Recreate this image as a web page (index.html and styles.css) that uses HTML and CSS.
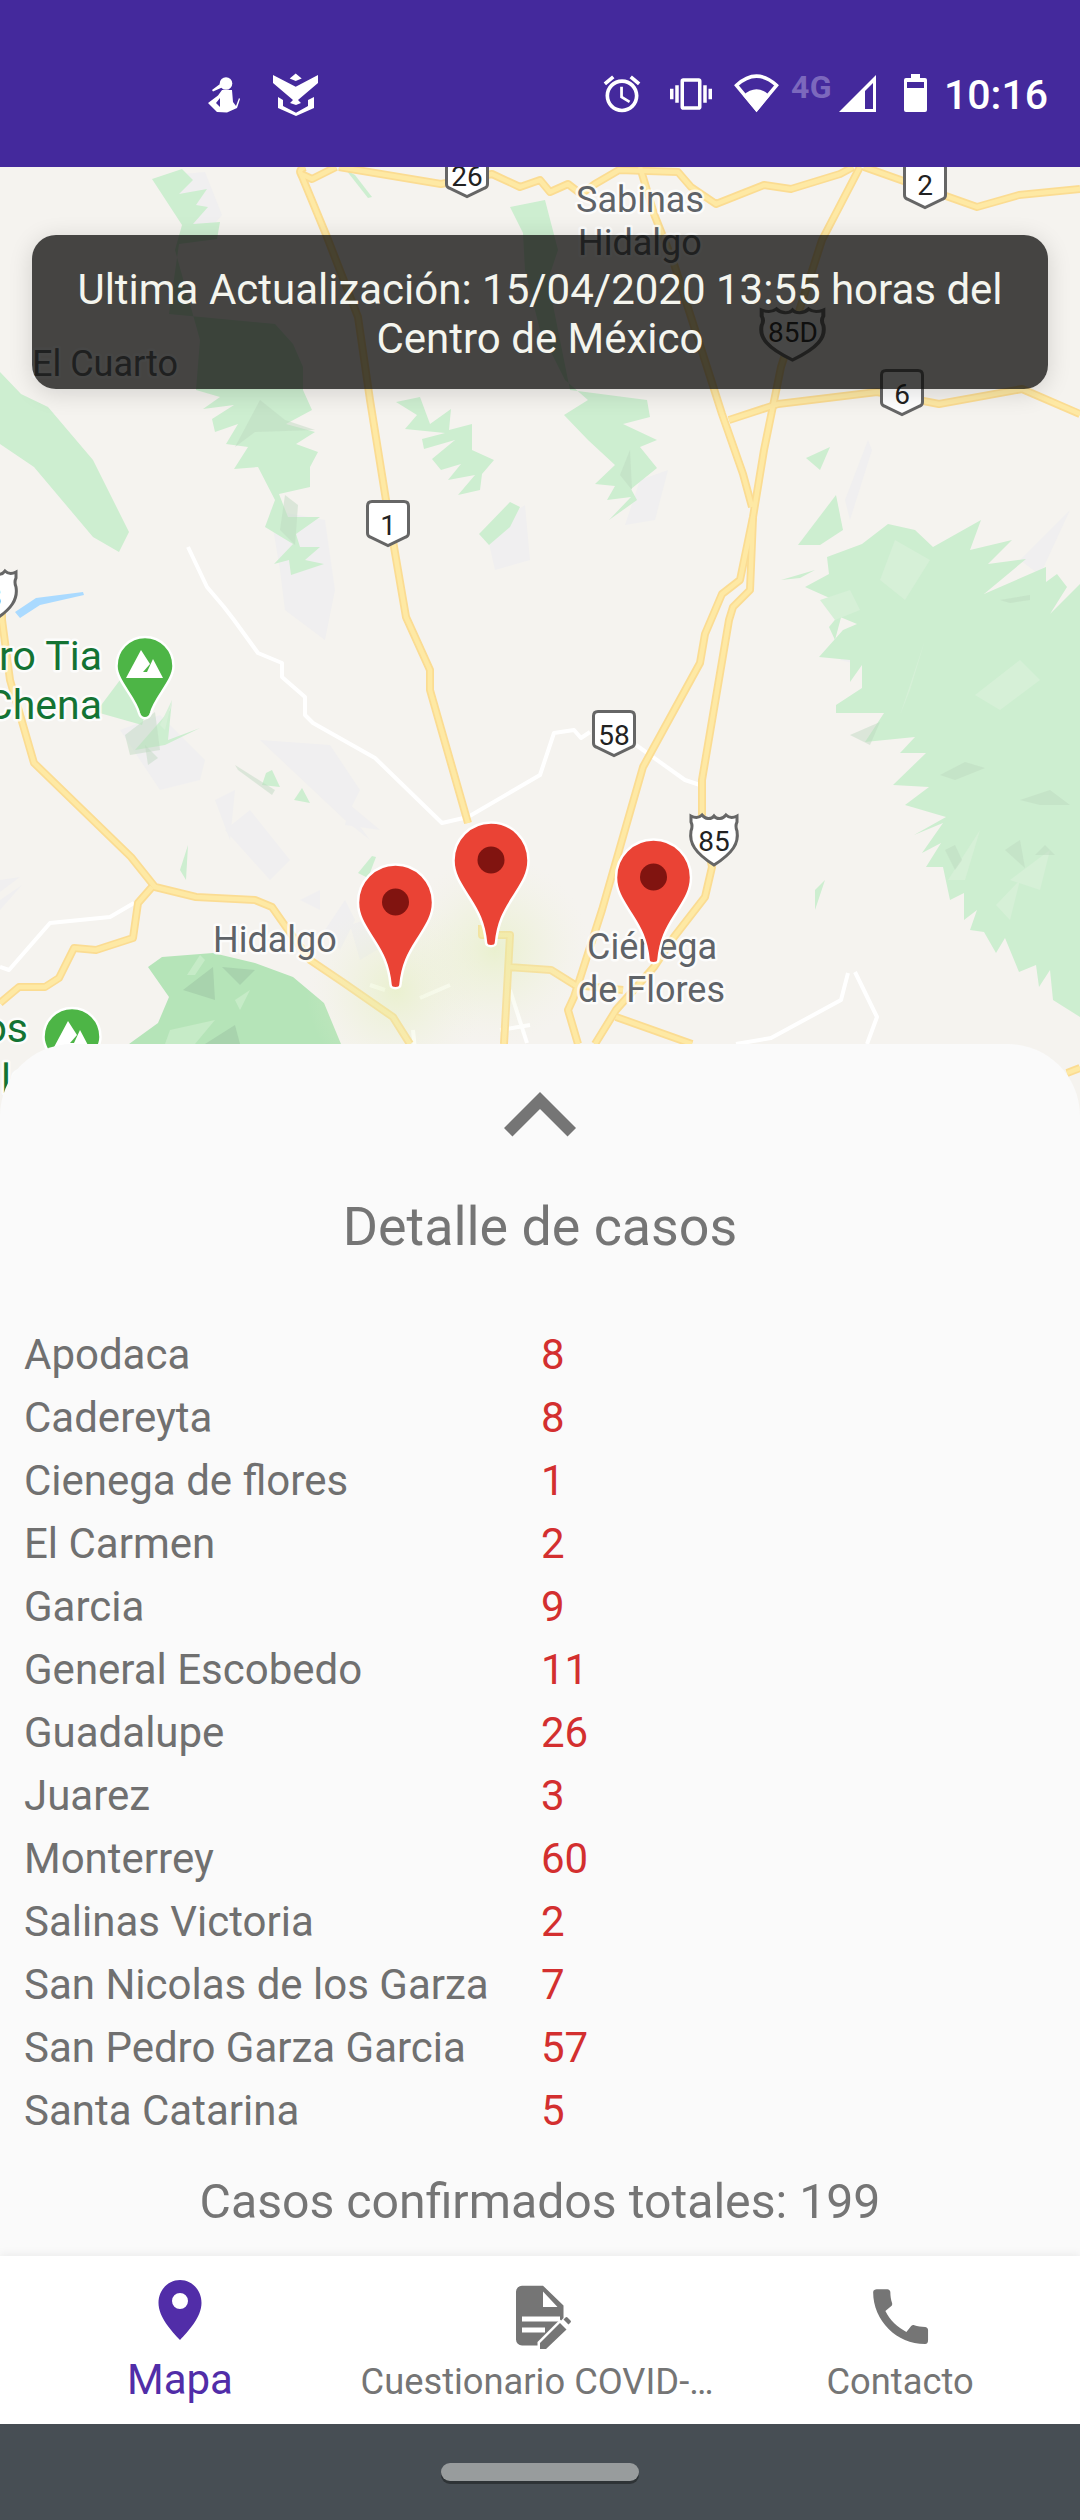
FILE: index.html
```html
<!DOCTYPE html>
<html lang="es">
<head>
<meta charset="utf-8">
<title>Mapa COVID-19</title>
<link rel="stylesheet" href="styles.css">
</head>
<body>
<div class="screen">
  <header class="statusbar">
    <div class="status-left">
      <svg class="sb-icon" width="32" height="44" viewBox="208 72 32 44"><circle cx="226" cy="83.5" r="6.3"/><path d="M220 84l-8 6 1 1.500 9-4zM222 90h10l1 12 3 4 3-8 1 1-3 9-10 4.500-10-.5-9-9 10-7.500zM216 103l4-5v9z" fill-rule="evenodd"/></svg>
      <svg class="sb-icon shield-icon" width="46" height="44" viewBox="273 72 46 44"><path d="M273 75l22.700 11.700L318 75v8l-20 17 3 3-5 2-6-2 3-3-20-17zM295.700 73.500l6 5-6 2.500-6-2.500zM278 97l5 3v6l13 6.700 12-6.700v-6l6-3v11l-18 8-18-8z"/></svg>
    </div>
    <div class="status-right">
      <svg class="sb-icon" width="44" height="44" viewBox="0 0 24 24"><path d="M22 5.720l-4.600-3.860-1.290 1.530 4.600 3.860L22 5.720zM7.880 3.390L6.600 1.860 2 5.710l1.290 1.530 4.590-3.850zM12.500 8H11v6l4.750 2.850.75-1.230-4-2.370V8zM12 4c-4.970 0-9 4.030-9 9s4.030 9 9 9 9-4.030 9-9-4.030-9-9-9zm0 16c-3.870 0-7-3.130-7-7s3.130-7 7-7 7 3.130 7 7-3.130 7-7 7z"/></svg>
      <svg class="sb-icon gap-26" width="42" height="42" viewBox="0 0 24 24"><path d="M0 15h2V9H0v6zm3 2h2V7H3v10zm19-8v6h2V9h-2zm-3 8h2V7h-2v10zM16.500 3h-9C6.670 3 6 3.670 6 4.500v15c0 .83.670 1.500 1.500 1.500h9c.83 0 1.500-.67 1.500-1.500v-15c0-.83-.67-1.500-1.500-1.500zM16 19H8V5h8v14z"/></svg>
      <svg class="sb-icon gap-22" width="45" height="44" viewBox="735 72 45 44"><path class="wifi-outline" d="M757.500 109.500L737.500 85.300Q757.500 67 777.500 85.300z"/><path d="M757.500 112L744 95.500Q757.500 83 771 95.500z"/></svg>
      <span class="net">4G</span>
      <svg class="sb-icon gap-6" width="37" height="44" viewBox="840 72 37 44"><path fill-rule="evenodd" d="M877 75v37h-37zM874 83l-8 8v18h8z"/></svg>
      <svg class="sb-icon gap-28" width="23" height="44" viewBox="905 72 23 44"><path fill-rule="evenodd" d="M912 74h9v4h5a2 2 0 0 1 2 2v30a2 2 0 0 1-2 2h-19a2 2 0 0 1-2-2V80a2 2 0 0 1 2-2h5zM908 82v6h17v-6z"/></svg>
      <span class="clock">10:16</span>
    </div>
  </header>

  <main class="stage">
    <svg class="map" width="1080" height="960" viewBox="0 167 1080 960" aria-label="Mapa">
      <defs>
        <radialGradient id="glow">
          <stop offset="0" stop-color="#dfeeb0" stop-opacity=".5"/>
          <stop offset=".55" stop-color="#e6efc4" stop-opacity=".22"/>
          <stop offset="1" stop-color="#f0f2dc" stop-opacity="0"/>
        </radialGradient>
        <path id="shield" d="M6 1.500H38Q42.500 1.500 42.500 6V33Q42.500 36 40 37L22 45.500 4 37Q1.500 36 1.500 33V6Q1.500 1.500 6 1.500Z"/>
        <path id="usshield" d="M2 3C6 5 10 5 13 2 16 6 22 7 25 3 28 7 34 6 37 2 40 5 44 5 48 3V9Q46 13 48 18C50 30 44 40 25 52 6 40 0 30 2 18Q4 13 2 9Z"/>
        <path id="pin" d="M0 0C21 0 37.500 17 37.500 38 37.500 52 30 62 22 75 13 89 7 100 5 120 5 125-5 125-5 120-7 100-13 89-22 75-30 62-37.500 52-37.500 38-37.500 17-21 0 0 0Z"/>
        <path id="greenpin" d="M0 0C16 0 28.500 13 28.500 29 28.500 44 10 60 6 76 4 83-4 83-6 76-10 60-28.500 44-28.500 29-28.500 13-16 0 0 0Z"/>
        <g id="highways">
          <path d="M301 174L327 237 358 317 370 400 386 500 406 617 430 670 430 690 468 823"/>
          <path d="M482 925V935H510L504 1044M508 967L551 970 575 985 623 990"/>
          <path d="M305 167Q298 170 301 174L312 179 336 167"/>
          <path d="M339 167L441 184 492 174 520 187 540 180 550 192 568 184 581 194 595 184 619 170 678 172 691 187 716 204 764 185 791 189 840 174 853 167"/>
          <path d="M864 167L977 207 1019 195 1080 189"/>
          <path d="M640 167L654 214 674 264 722 414 743 474 752 507"/>
          <path d="M729 420L778 404 877 392 939 404 1022 389 1080 414"/>
          <path d="M860 167L822 240 781 367 764 450 753 517 740 580 722 594 705 634 700 663 643 767 602 910 574 997 568 1010 578 1044"/>
          <path d="M753 517L750 590 733 607 729 620 702 780V817L712 867 705 897 674 937 654 967 616 1010 595 1044"/>
          <path d="M616 1017L692 1044M1067 1073L1080 1068"/>
          <path d="M2 600V620L10 680 34 763 131 857 155 887 196 897 255 900 272 907 286 927 310 960 344 983 393 1017 410 1044"/>
          <path d="M152 887L138 903 133 938 96 950 74 948 59 978 45 987 19 987 0 1003"/>
        </g>
      </defs>
      <rect class="land" x="0" y="167" width="1080" height="960"/>

      <g class="terrain-gray">
        <polygon points="170,175 205,172 222,215 200,240 185,210"/>
        <polygon points="270,510 325,520 335,590 325,640 285,610 280,570"/>
        <polygon points="486,530 525,505 530,560 495,570"/>
        <polygon points="640,480 668,470 655,520 625,525"/>
        <polygon points="845,500 868,440 872,450 850,520"/>
        <polygon points="860,610 905,570 900,620"/>
        <polygon points="1020,560 1070,510 1040,575"/>
        <polygon points="840,660 870,640 880,670"/>
        <polygon points="120,730 160,715 205,760 200,780 160,790 140,760"/>
        <polygon points="215,800 235,790 230,840"/>
        <polygon points="225,830 250,810 290,860 270,880"/>
        <polygon points="260,740 330,745 360,790 345,820"/>
        <polygon points="330,790 340,800 370,840 345,820"/>
        <polygon points="350,805 380,830 345,825"/>
        <polygon points="300,900 320,890 320,910"/>
        <polygon points="325,930 345,900 355,920 340,950"/>
        <polygon points="350,925 365,920 375,900 385,945 360,960"/>
        <polygon points="0,900 22,885 0,910"/>
        <polygon points="0,880 20,877 0,892"/>
      </g>

      <g class="terrain-green">
        <polygon points="0,372 21,394 48,407 93,460 110,494 129,532 119,552 93,537 34,467 0,444"/>
        <polygon points="152,179 182,169 193,180 179,194 207,189 196,205 208,207 193,224 220,222 217,239 179,244 169,314 275,324 293,344 303,367 303,390 312,410 286,424 315,432 296,444 318,452 310,467 310,487 279,494 288,517 320,517 296,534 300,547 320,547 305,560 324,564 291,575 289,560 274,564 293,544 265,527 275,500 258,467 234,469 248,447 226,444 238,424 215,432 212,419 234,405 203,409 220,397 196,390 200,340 175,250 182,225"/>
        <polygon points="396,402 420,397 430,424 451,409 449,430 472,424 472,450 494,460 482,474 480,490 458,495 475,475 448,480 461,464 441,470 432,459 455,440 424,449 422,439 445,433 405,429 417,415"/>
        <polygon points="479,534 510,502 520,507 510,527 489,545"/>
        <polygon points="510,207 545,200 558,250 548,280 570,390 647,400 650,417 623,424 657,440 640,447 657,468 631,489 637,500 609,520 631,497 607,500 615,486 595,484 615,465 588,440 564,415 588,400 565,380 540,330 525,270 523,233"/>
        <polygon points="888,524 915,530 933,547 981,520 970,550 1012,540 988,564 1026,559 984,594 1046,567 1046,582 1057,574 1067,587 1050,614 1080,584 1080,1017 1053,1000 1050,970 1039,987 1036,965 1019,972 1005,938 996,953 984,932 970,930 977,910 964,920 964,893 950,900 943,867 926,867 941,843 922,853 943,823 914,835 946,817 905,805 929,787 893,785 926,753 900,753 915,737 865,742 884,713 836,713 836,705 862,688 862,665 850,682 850,660 819,657 843,630 857,624 833,614 843,604 805,587 829,574 827,557 862,544"/>
        <polygon points="798,545 836,495 843,530 820,545"/>
        <polygon points="781,580 815,570 800,578"/>
        <polygon points="806,458 830,447 820,470"/>
        <polygon points="829,627 843,610 835,640"/>
        <polygon points="96,712 120,680 145,715 142,725"/>
        <polygon points="135,750 170,710 172,700 168,740 200,728 165,745"/>
        <polygon points="266,773 272,770 280,787 262,785"/>
        <polygon points="294,800 302,788 310,803"/>
        <polygon points="358,873 372,856 376,857 368,878"/>
        <polygon points="180,870 188,845 186,880"/>
        <polygon points="815,890 825,880 815,910"/>
        <polygon points="346,170 355,175 372,197 368,198"/>
      </g>

      <g class="terrain-light">
        <polygon points="820,600 850,590 860,610 835,620"/>
        <polygon points="895,540 930,560 905,600 880,580"/>
        <polygon points="900,715 925,640 910,690"/>
        <polygon points="975,695 1020,660 1040,680 1000,710"/>
        <polygon points="948,880 980,830 965,880"/>
        <polygon points="1010,880 1050,850 1040,890"/>
        <polygon points="996,905 1020,880 1010,920"/>
        <polygon points="160,725 172,700 165,730"/>
      </g>

      <g class="terrain-shade">
        <polygon points="850,735 880,722 870,745"/>
        <polygon points="940,775 965,762 985,768 955,780"/>
        <polygon points="1020,800 1050,790 1070,805 1040,805"/>
        <polygon points="955,845 962,860 955,870 945,850"/>
        <polygon points="1005,850 1020,840 1025,868"/>
        <polygon points="1035,855 1055,855 1045,845"/>
        <polygon points="260,400 285,420 315,430 255,432 235,447"/>
        <polygon points="285,495 298,505 295,545 280,530"/>
        <polygon points="125,735 155,712 160,750 130,755"/>
        <polygon points="145,745 158,758 148,765"/>
        <polygon points="235,765 275,790 272,795 238,770"/>
        <polygon points="1000,600 1030,595 1030,600 1010,603"/>
        <polygon points="620,475 630,450 632,490"/>
      </g>

      <polygon class="water" points="15,612 36,598 83,592 84,595 40,605 20,618"/>

      <g class="minor">
        <path d="M188 547L207 587 224 607 234 620 258 653 282 663V677L305 697V715L313 723 375 758 442 823 468 817 540 775 554 733 574 730 581 738 590 732"/>
        <path d="M636 745L685 780 700 785"/>
        <path d="M134 903L110 917 50 923 9 970 0 967"/>
        <path d="M848 973L841 1000 771 1038 736 1044M855 972L877 1017 867 1044"/>
        <path d="M510 990L527 1043"/>
        <path d="M370 985L385 990M420 998L450 985M415 1050L413 1030M500 1030L530 1025"/>
      </g>

      <use href="#highways" class="road-case"/>
      <use href="#highways" class="road-fill"/>

      <polygon class="forest" points="148,967 162,957 213,953 255,963 293,977 324,1003 341,1044 129,1044 158,1023 169,997"/>
      <g class="forest-shade">
        <polygon points="213,967 215,1000 183,990"/>
        <polygon points="222,967 255,970 240,985"/>
        <polygon points="235,1025 240,1044 205,1044"/>
      </g>
      <g class="forest-light">
        <polygon points="187,975 200,955 205,960 195,975"/>
        <polygon points="170,1030 215,1020 195,1044 165,1044"/>
        <polygon points="235,1000 250,990 240,1010"/>
      </g>

      <ellipse cx="396" cy="990" rx="90" ry="95" fill="url(#glow)"/>
      <ellipse cx="495" cy="950" rx="95" ry="95" fill="url(#glow)"/>

      <g class="map-label">
        <text x="576" y="212">Sabinas</text>
        <text x="578" y="255">Hidalgo</text>
        <text x="32" y="376">El Cuarto</text>
        <text x="213" y="952">Hidalgo</text>
        <text x="587" y="959">Ciénega</text>
        <text x="578" y="1002">de Flores</text>
      </g>
      <g class="park-label">
        <text x="102" y="670" text-anchor="end">ro Tia</text>
        <text x="102" y="719" text-anchor="end">Chena</text>
        <text x="28" y="1042" text-anchor="end">os</text>
        <text x="1" y="1093">la</text>
      </g>

      <g>
        <use href="#greenpin" x="145" y="637" class="park-pin"/>
        <path class="park-glyph" d="M126 678L141 650 150 664 143 672 147 672 153 659 163 678z"/>
        <use href="#greenpin" x="72" y="1008" class="park-pin"/>
        <path class="park-glyph" d="M53 1049L68 1021 77 1035 70 1043 74 1043 80 1030 90 1049z"/>
      </g>

      <g class="shields">
        <use href="#shield" x="445" y="151"/>
        <use href="#shield" x="903" y="162"/>
        <use href="#shield" x="880" y="369"/>
        <use href="#shield" x="366" y="500"/>
        <use href="#shield" x="592" y="710"/>
        <use href="#usshield" x="689" y="813"/>
        <use href="#usshield" transform="translate(759 307) scale(1.34 1.02)"/>
        <use href="#usshield" x="-32" y="569"/>
      </g>
      <g class="shield-num">
        <text x="467" y="186">26</text>
        <text x="925" y="195">2</text>
        <text x="902" y="404">6</text>
        <text x="388" y="535">1</text>
        <text x="614" y="745">58</text>
        <text x="714" y="851">85</text>
        <text x="793" y="342">85D</text>
        <text x="-6" y="607">3</text>
      </g>

      <g>
        <use href="#pin" x="395.500" y="864.500" class="pin"/>
        <ellipse class="pin-dot" cx="395.500" cy="902" rx="13.500" ry="13.500"/>
        <use href="#pin" x="491" y="822.500" class="pin"/>
        <ellipse class="pin-dot" cx="491" cy="860" rx="13.500" ry="13.500"/>
        <use href="#pin" x="653.500" y="839.500" class="pin"/>
        <ellipse class="pin-dot" cx="653.500" cy="877" rx="13.500" ry="13.500"/>
      </g>
    </svg>

    <div class="toast">Ultima Actualización: 15/04/2020 13:55 horas del Centro de México</div>

    <section class="sheet">
      <svg class="chevron" width="144" height="144" viewBox="0 0 24 24"><path d="M12 8l-6 6 1.410 1.410L12 10.830l4.590 4.580L18 14z"/></svg>
      <h1 class="sheet-title">Detalle de casos</h1>
      <ul class="cases">
        <li class="case"><span class="case-name">Apodaca</span><span class="case-num">8</span></li>
        <li class="case"><span class="case-name">Cadereyta</span><span class="case-num">8</span></li>
        <li class="case"><span class="case-name">Cienega de flores</span><span class="case-num">1</span></li>
        <li class="case"><span class="case-name">El Carmen</span><span class="case-num">2</span></li>
        <li class="case"><span class="case-name">Garcia</span><span class="case-num">9</span></li>
        <li class="case"><span class="case-name">General Escobedo</span><span class="case-num">11</span></li>
        <li class="case"><span class="case-name">Guadalupe</span><span class="case-num">26</span></li>
        <li class="case"><span class="case-name">Juarez</span><span class="case-num">3</span></li>
        <li class="case"><span class="case-name">Monterrey</span><span class="case-num">60</span></li>
        <li class="case"><span class="case-name">Salinas Victoria</span><span class="case-num">2</span></li>
        <li class="case"><span class="case-name">San Nicolas de los Garza</span><span class="case-num">7</span></li>
        <li class="case"><span class="case-name">San Pedro Garza Garcia</span><span class="case-num">57</span></li>
        <li class="case"><span class="case-name">Santa Catarina</span><span class="case-num">5</span></li>
      </ul>
      <p class="total">Casos confirmados totales: 199</p>
    </section>
  </main>

  <nav class="tabs">
    <div class="tab tab-active">
      <svg class="tab-icon" width="90" height="80" viewBox="135 2276 90 80"><path d="M180 2280c12 0 21.500 10 21.500 23 0 14-13 28-21.500 37-8.500-9-21.500-23-21.500-37 0-13 9.500-23 21.500-23zM180 2293a8 8 0 1 0 0 16 8 8 0 1 0 0-16z" fill-rule="evenodd"/></svg>
      <span class="tab-label">Mapa</span>
    </div>
    <div class="tab">
      <svg class="tab-icon" width="90" height="80" viewBox="495 2276 90 80">
        <g transform="translate(500 2275)">
          <path d="M22 10.700H43L63.500 30.500V43L38.500 70.500H22a6 6 0 0 1-6-6V16.700a6 6 0 0 1 6-6z"/>
          <path class="icon-cut" d="M43 16.500L57.500 32H43zM22 41.500H60V46.500H22zM22 52.500H45V57.500H22z"/>
          <path class="pencil-halo" d="M40 74v-6L60 48l6.500 6.500L46 74z"/>
          <path d="M40 74v-6L60 48l6.500 6.500L46 74zM63.500 44.500l2-2q1-1 2 0l3 3q1 1 0 2l-2 2z"/>
        </g>
      </svg>
      <span class="tab-label tab-label-clip">Cuestionario COVID-…</span>
    </div>
    <div class="tab">
      <svg class="tab-icon" width="90" height="80" viewBox="855 2276 90 80"><path transform="translate(864 2280) scale(3.050)" d="M20.010 15.380c-1.230 0-2.420-.2-3.530-.56-.35-.12-.74-.03-1.010.24l-1.570 1.970c-2.830-1.350-5.480-3.900-6.890-6.830l1.950-1.660c.27-.28.350-.67.240-1.020-.37-1.110-.56-2.300-.56-3.530 0-.54-.45-.99-.99-.99H4.190C3.650 3 3 3.240 3 3.990 3 13.280 10.730 21 20.010 21c.71 0 .99-.63.99-1.180v-3.450c0-.54-.45-.99-.99-.99z"/></svg>
      <span class="tab-label">Contacto</span>
    </div>
  </nav>

  <footer class="navbar"><span class="home-pill"></span></footer>
</div>
</body>
</html>
```

FILE: styles.css
```css
* { box-sizing: border-box; }
html, body { margin: 0; padding: 0; }
body { font-family: Roboto, "Liberation Sans", sans-serif; background: #fafafa; }

.screen { width: 1080px; height: 2520px; display: flex; flex-direction: column; overflow: hidden; }

/* status bar */
.statusbar { height: 167px; flex: none; background: #44299c; display: flex; justify-content: space-between; padding: 72px 32px 0 208px; align-items: flex-start; position: relative; z-index: 3; }
.status-left, .status-right { display: flex; align-items: flex-start; }
.sb-icon { display: block; fill: #fff; flex: none; }
.shield-icon { margin-left: 33px; }
.gap-26 { margin-left: 26px; margin-top: 1px; }
.gap-22 { margin-left: 22px; }
.gap-6 { margin-left: 6px; }
.gap-28 { margin-left: 28px; }
.wifi-outline { fill: none; stroke: #fff; stroke-width: 3.500px; stroke-linejoin: miter; }
.net { margin-left: 12px; font-size: 32px; line-height: 30px; font-weight: 700; color: #7c68bd; width: 42px; margin-top: 0; letter-spacing: .5px; }
.clock { margin-left: 17px; font-size: 41px; line-height: 44px; font-weight: 500; color: #fff; margin-top: 1px; }

/* map stage */
.stage { flex: 1; position: relative; display: flex; flex-direction: column; min-height: 0; }
.map { position: absolute; left: 0; top: 0; display: block; }
.land { fill: #f5f3ef; }
.terrain-gray polygon { fill: #f0eff0; }
.terrain-green polygon { fill: #cdeed0; }
.terrain-light polygon { fill: #d6f0d7; }
.terrain-shade polygon { fill: #bcd6bf; opacity: .45; }
.water { fill: #aadaff; }
.minor path { fill: none; stroke: #fff; stroke-width: 4px; stroke-linejoin: round; }
.road-case { fill: none; stroke: #fbdc92; stroke-width: 8px; stroke-linejoin: round; }
.road-fill { fill: none; stroke: #fee9a4; stroke-width: 4.500px; stroke-linejoin: round; }
.forest { fill: #b5e4b8; }
.forest-shade polygon { fill: #a8d3ad; }
.forest-light polygon { fill: #c6ebc7; }

.map-label text { font-size: 36px; fill: #5f6368; stroke: #fff; stroke-width: 5px; stroke-opacity: .75; paint-order: stroke; stroke-linejoin: round; }
.park-label text { font-size: 41px; fill: #137333; stroke: #fff; stroke-width: 5px; stroke-opacity: .75; paint-order: stroke; stroke-linejoin: round; }
.park-pin { fill: #4db546; stroke: #fff; stroke-width: 2.500px; }
.park-glyph { fill: #fff; }

.shields { fill: #fff; stroke: #666; stroke-width: 3px; }
.shield-num text { font-size: 28px; fill: #222; text-anchor: middle; }

.pin { fill: #ea4335; stroke: #fff; stroke-width: 2.500px; }
.pin-dot { fill: #811410; }

/* toast */
.toast { position: absolute; left: 32px; top: 68px; width: 1016px; height: 154px; border-radius: 24px; background: rgba(10, 9, 8, .75); box-shadow: 0 4px 24px rgba(0, 0, 0, .14); color: #f4f5ee; font-size: 42px; line-height: 49px; text-align: center; padding: 30px 32px 0; z-index: 2; }

/* sheet */
.sheet { position: relative; margin-top: 877px; flex: 1; background: #fafafa; border-radius: 72px 72px 0 0; display: flex; flex-direction: column; align-items: stretch; min-height: 0; }
.chevron { display: block; align-self: center; fill: #757575; flex: none; }
.sheet-title { margin: 8px 0 0; font-size: 53.800px; font-weight: 400; line-height: 62px; color: #757575; text-align: center; }
.cases { list-style: none; margin: 65px 0 0; padding: 0 0 0 24px; }
.case { display: grid; grid-template-columns: 517px 1fr; height: 63px; line-height: 63px; font-size: 42px; }
.case-name { color: #707070; }
.case-num { color: #d32f2f; }
.total { margin: 32px 0 0; font-size: 48.200px; line-height: 56px; color: #757575; text-align: center; }

/* tabs */
.tabs { height: 168px; flex: none; background: #fff; display: grid; grid-template-columns: repeat(3, 360px); box-shadow: 0 -3px 8px rgba(0, 0, 0, .05); position: relative; }
.tab { display: flex; flex-direction: column; align-items: center; padding-top: 20px; color: #757575; fill: #757575; }
.tab-icon { display: block; flex: none; }
.tab-label { font-size: 36.300px; line-height: 50px; margin-top: 1px; white-space: nowrap; }
.tab-label-clip { position: relative; right: 3px; }
.tab-active { color: #512da8; fill: #512da8; }
.tab-active .tab-label { font-size: 42px; margin-top: -1px; }
.icon-cut { fill: #fff; }
.pencil-halo { fill: #fff; stroke: #fff; stroke-width: 5px; }

/* nav bar */
.navbar { height: 96px; flex: none; background: #474e54; display: flex; justify-content: center; padding-top: 39px; }
.home-pill { width: 198px; height: 18px; border-radius: 9px; background: #989c9d; box-shadow: 0 3px 0 #2e3336; }
```
